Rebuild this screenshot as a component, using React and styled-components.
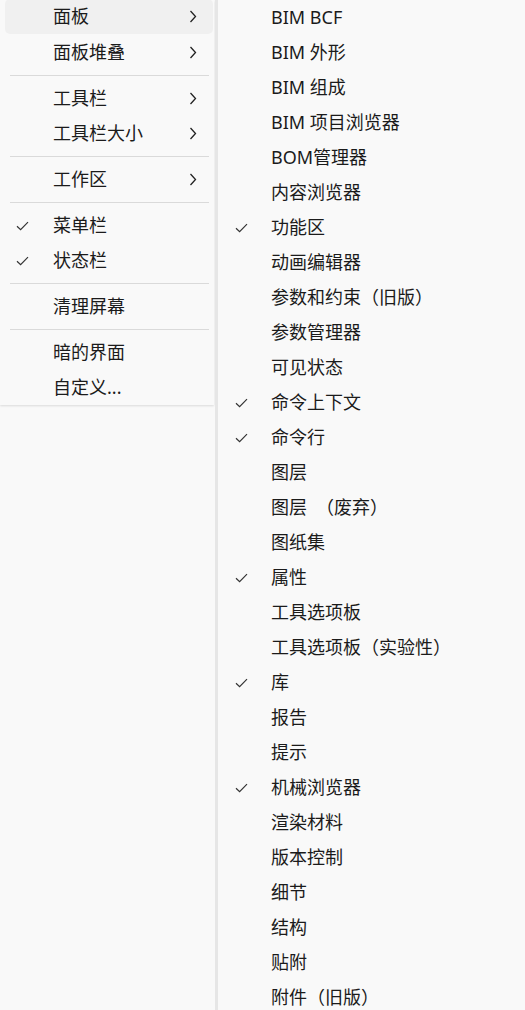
import React from 'react';
import styled, { createGlobalStyle } from 'styled-components';

const GlobalStyle = createGlobalStyle`
  html, body {
    margin: 0;
    padding: 0;
    background: #f9f9f9;
    overflow: hidden;
  }
  body {
    font-family: "Noto Sans", "Noto Sans CJK SC", sans-serif;
    color: #1b1b1b;
  }
`;

const Page = styled.div`
  display: flex;
  flex-direction: row;
  align-items: flex-start;
  width: 525px;
  height: 1010px;
  overflow: hidden;
`;

const MainMenu = styled.div`
  width: 214px;
  flex-shrink: 0;
  background: #f9f9f9;
  box-shadow: 0 1px 2px rgba(0, 0, 0, 0.12);
  display: flex;
  flex-direction: column;
`;

const SubMenu = styled.div`
  flex: 1;
  border-left: 3px solid #e6e6e6;
  margin-left: 1px;
  background: #f9f9f9;
  display: flex;
  flex-direction: column;
`;

const Row = styled.div`
  display: flex;
  flex-direction: row;
  align-items: center;
  height: 35px;
  flex-shrink: 0;
  margin: ${(p) => (p.$first ? '-1px 1px 1px 5px' : '0 1px 0 5px')};
  border-radius: 5px;
  background: ${(p) => (p.$active ? '#f0f0f0' : 'transparent')};
  font-size: 18px;
  line-height: 1;
  white-space: nowrap;
`;

const SubRow = styled(Row)`
  margin: 0;
`;

const CheckCell = styled.div`
  width: ${(p) => p.$w}px;
  flex-shrink: 0;
  display: flex;
  align-items: center;
  padding-left: ${(p) => p.$pad}px;
  box-sizing: border-box;
  height: 100%;
`;

const Label = styled.span`
  flex: 1;
  padding-bottom: 1px;
`;

const Arrow = styled.div`
  width: 24px;
  display: flex;
  align-items: center;
  height: 100%;
`;

const Separator = styled.div`
  height: 1px;
  margin: 5px 5px 5px 10px;
  background: #dadada;
  flex-shrink: 0;
`;

const Check = () => (
  <svg width="13" height="10" viewBox="0 0 13 10">
    <path d="M1 5.2 L4.6 8.6 L12 1.2" fill="none" stroke="#333" strokeWidth="1.2" />
  </svg>
);

const Chevron = () => (
  <svg width="8" height="13" viewBox="0 0 8 13">
    <path d="M1.5 1 L6.5 6.5 L1.5 12" fill="none" stroke="#222" strokeWidth="1.3" />
  </svg>
);

const mainItems = [
  { label: '面板', sub: true, active: true },
  { label: '面板堆叠', sub: true },
  'sep',
  { label: '工具栏', sub: true },
  { label: '工具栏大小', sub: true },
  'sep',
  { label: '工作区', sub: true },
  'sep',
  { label: '菜单栏', checked: true },
  { label: '状态栏', checked: true },
  'sep',
  { label: '清理屏幕' },
  'sep',
  { label: '暗的界面' },
  { label: '自定义...' },
];

const panelItems = [
  ['BIM BCF'],
  ['BIM 外形'],
  ['BIM 组成'],
  ['BIM 项目浏览器'],
  ['BOM管理器'],
  ['内容浏览器'],
  ['功能区', true],
  ['动画编辑器'],
  ['参数和约束（旧版）'],
  ['参数管理器'],
  ['可见状态'],
  ['命令上下文', true],
  ['命令行', true],
  ['图层'],
  ['图层　（废弃）'],
  ['图纸集'],
  ['属性', true],
  ['工具选项板'],
  ['工具选项板（实验性）'],
  ['库', true],
  ['报告'],
  ['提示'],
  ['机械浏览器', true],
  ['渲染材料'],
  ['版本控制'],
  ['细节'],
  ['结构'],
  ['贴附'],
  ['附件（旧版）'],
];

const App = () => {
  return (
    <Page>
      <GlobalStyle />
      <MainMenu>
        {mainItems.map((item, i) =>
          item === 'sep' ? (
            <Separator key={i} />
          ) : (
            <Row key={i} $active={item.active} $first={i === 0}>
              <CheckCell $w={48} $pad={11}>{item.checked && <Check />}</CheckCell>
              <Label>{item.label}</Label>
              <Arrow>{item.sub && <Chevron />}</Arrow>
            </Row>
          )
        )}
      </MainMenu>
      <SubMenu>
        {panelItems.map(([label, checked], i) => (
          <SubRow key={i}>
            <CheckCell $w={53} $pad={17}>{checked && <Check />}</CheckCell>
            <Label>{label}</Label>
          </SubRow>
        ))}
      </SubMenu>
    </Page>
  );
};

export default App;
